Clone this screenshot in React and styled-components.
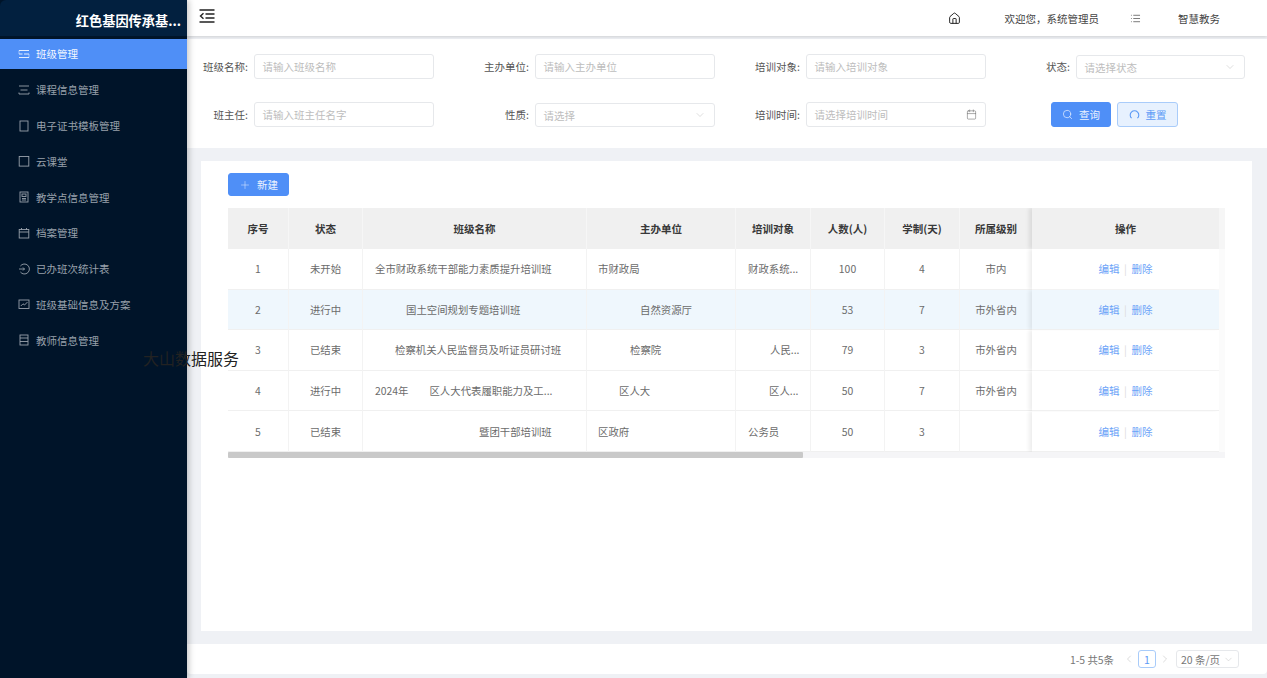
import React from 'react';
import styled, { createGlobalStyle } from 'styled-components';
import { House, List, ChevronDown, ChevronLeft, ChevronRight, Calendar, Search, Plus } from 'lucide-react';

const GlobalStyle = createGlobalStyle`
  html, body {
    margin: 0;
    padding: 0;
    height: 100%;
    overflow: hidden;
    background: #eff1f5;
    font-family: "Noto Sans CJK SC", "Liberation Sans", sans-serif;
    font-size: 10.5px;
    color: #666;
  }
  * { box-sizing: border-box; }
`;

const Page = styled.div`
  position: relative;
  display: flex;
  width: 1267px;
  height: 678px;
  overflow: hidden;
`;

const Sidebar = styled.aside`
  width: 187px;
  flex: none;
  background: #001429;
  box-shadow: 2px 0 6px rgba(0, 0, 0, 0.22);
  z-index: 2;
  display: flex;
  flex-direction: column;
`;

const Logo = styled.div`
  height: 36px;
  margin-bottom: 3px;
  padding: 12px 6px 0 0;
  background: #02203f;
  border-top-left-radius: 6px;
  color: #fff;
  font-size: 13.2px;
  font-weight: 700;
  line-height: 18px;
  text-align: right;
  white-space: nowrap;
`;

const MenuList = styled.nav`
  display: flex;
  flex-direction: column;
  gap: 5.9px;
`;

const MenuItem = styled.div`
  height: 29.9px;
  display: flex;
  align-items: center;
  gap: 6px;
  padding-left: 18px;
  background: ${({ $active }) => ($active ? '#4f8ff7' : 'transparent')};
  color: ${({ $active }) => ($active ? '#f4f8ff' : '#98a1ab')};
  font-size: 10.5px;
  white-space: nowrap;
`;

const Watermark = styled.div`
  position: absolute;
  left: 143px;
  top: 347px;
  z-index: 3;
  color: #222;
  font-size: 16px;
  line-height: 22px;
`;

const Main = styled.main`
  flex: 1;
  min-width: 0;
  display: flex;
  flex-direction: column;
`;

const Header = styled.header`
  height: 36px;
  flex: none;
  display: flex;
  align-items: center;
  padding-left: 12px;
  background: #fff;
  box-shadow: 0 1px 3px rgba(0, 0, 0, 0.14);
  color: #444;
  z-index: 1;
`;

const CollapseButton = styled.div`
  display: flex;
  margin-top: -5px;
  color: #222;
`;

const HeaderRight = styled.div`
  margin-left: auto;
  display: flex;
  align-items: center;
  padding-right: 47px;
`;

const HeaderIcon = styled.span`
  display: flex;
  color: #222;
  margin-right: ${({ $gap }) => $gap}px;
`;

const HeaderText = styled.span`
  margin-right: ${({ $gap }) => $gap || 0}px;
  white-space: nowrap;
`;

const FilterPanel = styled.section`
  margin-top: 3px;
  height: 109px;
  flex: none;
  background: #fff;
  padding: 15px 0 0 10px;
  display: grid;
  grid-template-columns: 237px 281px 271px 259px;
  grid-auto-rows: 25px;
  row-gap: 23px;
`;

const Field = styled.div`
  display: flex;
  align-items: flex-end;
  justify-content: flex-end;
  height: 25px;
`;

const Label = styled.label`
  height: 24px;
  line-height: 24px;
  margin-right: 6px;
  color: #555;
  white-space: nowrap;
`;

const InputBox = styled.div`
  width: ${({ $width }) => $width || 180}px;
  height: ${({ $select }) => ($select ? 24 : 25)}px;
  display: flex;
  align-items: center;
  justify-content: space-between;
  padding: 0 8px 0 7.5px;
  border: 1px solid #e6e8eb;
  border-radius: 3px;
  background: #fff;
  color: #bdbdbd;
  white-space: nowrap;
`;

const ButtonRow = styled.div`
  display: flex;
  gap: 6px;
  padding-left: 65px;
`;

const Button = styled.button`
  width: ${({ $width }) => $width || 60}px;
  height: ${({ $short }) => ($short ? 23 : 25)}px;
  display: flex;
  align-items: center;
  justify-content: center;
  gap: 6px;
  padding: 0;
  border-radius: 3px;
  border: 1px solid ${({ $ghost }) => ($ghost ? '#a9ccfa' : '#4f8ff7')};
  background: ${({ $ghost }) => ($ghost ? '#e7f1fe' : '#4f8ff7')};
  color: ${({ $ghost }) => ($ghost ? '#5c9af6' : '#eaf2ff')};
  font: inherit;
`;

const Card = styled.section`
  height: 470px;
  flex: none;
  margin: 13px 15px 13px 14px;
  padding: 12px 0 0 27px;
  background: #fff;
`;

const TableWrap = styled.div`
  width: 997px;
  margin-top: 12px;
  background: linear-gradient(180deg, #f6f6f6 0, #f6f6f6 41px, #fbfbfb 41px);
`;

const Table = styled.table`
  width: 991px;
  table-layout: fixed;
  border-collapse: separate;
  border-spacing: 0;
`;

const Th = styled.th`
  height: 41px;
  padding: 0;
  background: #f0f0f0;
  border-left: 1px solid #f6f6f6;
  color: #383838;
  font-size: 10.5px;
  font-weight: 700;
  text-align: center;
  &:first-child {
    border-left: 0;
  }
  &:last-child {
    border-left: 0;
    box-shadow: -3px 0 4px rgba(0, 0, 0, 0.09);
    clip-path: inset(0 0 0 -8px);
    position: relative;
  }
`;

const Row = styled.tr`
  height: 40.6px;
  background: ${({ $striped }) => ($striped ? '#eff7fd' : '#fff')};
`;

const Td = styled.td`
  padding: 0;
  padding-left: ${({ $indent }) => $indent || 0}px;
  border-left: 1px solid #f3f3f3;
  border-bottom: 1px solid #f0f0f0;
  color: #6b6b6b;
  font-size: 10.4px;
  text-align: ${({ $indent }) => ($indent ? 'left' : 'center')};
  white-space: nowrap;
  &:first-child {
    border-left: 0;
  }
`;

const ActionCell = styled.td`
  position: relative;
  padding: 0;
  border-bottom: 1px solid #f0f0f0;
  background: inherit;
  box-shadow: -3px 0 4px rgba(0, 0, 0, 0.07);
  clip-path: inset(0 0 0 -8px);
  text-align: center;
  color: #6ba3f8;
`;

const ActionSep = styled.span`
  margin: 0 4.5px;
  color: #dcdcdc;
`;

const TitleYear = styled.span`
  margin-right: 21px;
`;

const ScrollTrack = styled.div`
  height: 6px;
  background: #f5f5f7;
`;

const ScrollThumb = styled.div`
  width: 575px;
  height: 100%;
  background: #c9c9c9;
  border-radius: 1px;
`;

const Footer = styled.footer`
  height: 30px;
  flex: none;
  display: flex;
  align-items: center;
  justify-content: flex-end;
  padding-right: 28px;
  background: #fff;
  border-radius: 0 0 4px 4px;
  color: #777;
`;

const PageCount = styled.span`
  margin-right: 9px;
  font-size: 10.4px;
`;

const PageArrow = styled.span`
  display: flex;
  color: #c4c4c4;
`;

const PageBox = styled.span`
  width: 18px;
  height: 18px;
  margin: 0 3px;
  display: flex;
  align-items: center;
  justify-content: center;
  border: 1px solid #a9ccfa;
  border-radius: 3px;
  color: #5c9af6;
`;

const PageSize = styled.span`
  width: 63px;
  height: 18px;
  margin-left: 5px;
  display: flex;
  align-items: center;
  justify-content: center;
  gap: 3px;
  border: 1px solid #e6e8eb;
  border-radius: 3px;
  white-space: nowrap;
`;

const menuIcons = {
  class: <><path d="M1 2.5h10M1 9.5h10M1 6h3.5M6 6h5" /><path d="M1 2.5V6M11 6v3.5" strokeWidth="0.5" /></>,
  course: <><path d="M1 2h10M2.5 6h7M1 10h10M1 8.5V10M11 8.5V10" /></>,
  cert: <><rect x="2" y="1" width="8" height="10" /></>,
  cloud: <rect x="1.2" y="1.5" width="9.6" height="9.6" />,
  point: <><rect x="2" y="1" width="8" height="10" /><rect x="4" y="3" width="4" height="2.5" /><path d="M4 7.5h4M4 9h4" /></>,
  archive: <><rect x="1.2" y="2.5" width="9.6" height="8.5" /><path d="M1.2 5h9.6M3.5 1v2M8.5 1v2" /></>,
  done: <><path d="M2.4 3a5 5 0 1 1 0 6" /><path d="M1 6h5.5M5 4.5 6.5 6 5 7.5" /></>,
  base: <><rect x="1" y="2" width="10" height="8.5" /><path d="M2.8 8 5 5.8 6.5 7l3-3" /></>,
  teacher: <><rect x="2" y="1" width="8" height="10" /><path d="M2 4h8M2 7.5h8" /></>,
};

const MenuIcon = ({ name }) => (
  <svg width="12" height="12" viewBox="0 0 12 12" fill="none" stroke="currentColor" strokeWidth="0.9">
    {menuIcons[name]}
  </svg>
);

const menus = [
  { name: 'class', label: '班级管理', active: true },
  { name: 'course', label: '课程信息管理' },
  { name: 'cert', label: '电子证书模板管理' },
  { name: 'cloud', label: '云课堂' },
  { name: 'point', label: '教学点信息管理' },
  { name: 'archive', label: '档案管理' },
  { name: 'done', label: '已办班次统计表' },
  { name: 'base', label: '班级基础信息及方案' },
  { name: 'teacher', label: '教师信息管理' },
];

const columns = [
  { title: '序号', width: 60 },
  { title: '状态', width: 74 },
  { title: '班级名称', width: 224 },
  { title: '主办单位', width: 149 },
  { title: '培训对象', width: 75 },
  { title: '人数(人)', width: 74 },
  { title: '学制(天)', width: 75 },
  { title: '所属级别', width: 73 },
  { title: '操作', width: 187 },
];

const rows = [
  { id: 1, status: '未开始', name: '全市财政系统干部能力素质提升培训班', nameAt: 12, unit: '市财政局', unitAt: 11, target: '财政系统...', targetAt: 12, count: 100, days: 4, level: '市内' },
  { id: 2, status: '进行中', name: '国土空间规划专题培训班', nameAt: 43, unit: '自然资源厅', unitAt: 53, target: '', targetAt: 12, count: 53, days: 7, level: '市外省内' },
  { id: 3, status: '已结束', name: '检察机关人民监督员及听证员研讨班', nameAt: 32, unit: '检察院', unitAt: 43, target: '人民...', targetAt: 34, count: 79, days: 3, level: '市外省内' },
  { id: 4, status: '进行中', year: '2024年', name: '区人大代表履职能力及工...', nameAt: 12, unit: '区人大', unitAt: 32, target: '区人...', targetAt: 33, count: 50, days: 7, level: '市外省内' },
  { id: 5, status: '已结束', name: '暨团干部培训班', nameAt: 116, unit: '区政府', unitAt: 11, target: '公务员', targetAt: 12, count: 50, days: 3, level: '' },
];

const CollapseIcon = () => (
  <svg width="16" height="14" viewBox="0 0 16 14" fill="none" stroke="currentColor" strokeWidth="1.4">
    <path d="M0.5 1h15M6.5 5h9M6.5 9h9M0.5 13h15" />
    <path d="M4.5 4.2 1.5 7l3 2.8" />
  </svg>
);

const ResetIcon = () => (
  <svg width="11" height="11" viewBox="0 0 11 11" fill="none" stroke="currentColor" strokeWidth="1.1">
    <path d="M2.6 9.2A4.3 4.3 0 1 1 8.4 9.2" />
  </svg>
);

export default function App() {
  return (
    <Page>
      <GlobalStyle />
      <Sidebar>
        <Logo>红色基因传承基...</Logo>
        <MenuList>
          {menus.map((item) => (
            <MenuItem key={item.name} $active={item.active}>
              <MenuIcon name={item.name} />
              {item.label}
            </MenuItem>
          ))}
        </MenuList>
      </Sidebar>
      <Watermark>大山数据服务</Watermark>
      <Main>
        <Header>
          <CollapseButton>
            <CollapseIcon />
          </CollapseButton>
          <HeaderRight>
            <HeaderIcon $gap={44}>
              <House size={13} strokeWidth={1.8} />
            </HeaderIcon>
            <HeaderText $gap={31}>欢迎您，系统管理员</HeaderText>
            <HeaderIcon $gap={37}>
              <List size={11} strokeWidth={1.3} />
            </HeaderIcon>
            <HeaderText>智慧教务</HeaderText>
          </HeaderRight>
        </Header>
        <FilterPanel>
          <Field>
            <Label>班级名称:</Label>
            <InputBox>请输入班级名称</InputBox>
          </Field>
          <Field>
            <Label>主办单位:</Label>
            <InputBox>请输入主办单位</InputBox>
          </Field>
          <Field>
            <Label>培训对象:</Label>
            <InputBox>请输入培训对象</InputBox>
          </Field>
          <Field>
            <Label>状态:</Label>
            <InputBox $width={169} $select>
              请选择状态
              <ChevronDown size={12} strokeWidth={1} />
            </InputBox>
          </Field>
          <Field>
            <Label>班主任:</Label>
            <InputBox>请输入班主任名字</InputBox>
          </Field>
          <Field>
            <Label>性质:</Label>
            <InputBox $select>
              请选择
              <ChevronDown size={12} strokeWidth={1} />
            </InputBox>
          </Field>
          <Field>
            <Label>培训时间:</Label>
            <InputBox>
              请选择培训时间
              <Calendar size={11} strokeWidth={1.2} color="#666" />
            </InputBox>
          </Field>
          <ButtonRow>
            <Button>
              <Search size={11} strokeWidth={1.5} />
              查询
            </Button>
            <Button $ghost $width={61}>
              <ResetIcon />
              重置
            </Button>
          </ButtonRow>
        </FilterPanel>
        <Card>
          <Button $short $width={61}>
            <Plus size={12} strokeWidth={1} />
            新建
          </Button>
          <TableWrap>
            <Table>
              <colgroup>
                {columns.map((col) => (
                  <col key={col.title} width={col.width} />
                ))}
              </colgroup>
              <thead>
                <tr>
                  {columns.map((col) => (
                    <Th key={col.title}>{col.title}</Th>
                  ))}
                </tr>
              </thead>
              <tbody>
                {rows.map((row) => (
                  <Row key={row.id} $striped={row.id === 2}>
                    <Td>{row.id}</Td>
                    <Td>{row.status}</Td>
                    <Td $indent={row.nameAt}>
                      {row.year && <TitleYear>{row.year}</TitleYear>}
                      {row.name}
                    </Td>
                    <Td $indent={row.unitAt}>{row.unit}</Td>
                    <Td $indent={row.targetAt}>{row.target}</Td>
                    <Td>{row.count}</Td>
                    <Td>{row.days}</Td>
                    <Td>{row.level}</Td>
                    <ActionCell>
                      编辑
                      <ActionSep>|</ActionSep>
                      删除
                    </ActionCell>
                  </Row>
                ))}
              </tbody>
            </Table>
            <ScrollTrack>
              <ScrollThumb />
            </ScrollTrack>
          </TableWrap>
        </Card>
        <Footer>
          <PageCount>1-5 共5条</PageCount>
          <PageArrow>
            <ChevronLeft size={12} strokeWidth={1.2} />
          </PageArrow>
          <PageBox>1</PageBox>
          <PageArrow>
            <ChevronRight size={12} strokeWidth={1.2} />
          </PageArrow>
          <PageSize>
            20 条/页
            <ChevronDown size={11} strokeWidth={1} color="#bbb" />
          </PageSize>
        </Footer>
      </Main>
    </Page>
  );
}
